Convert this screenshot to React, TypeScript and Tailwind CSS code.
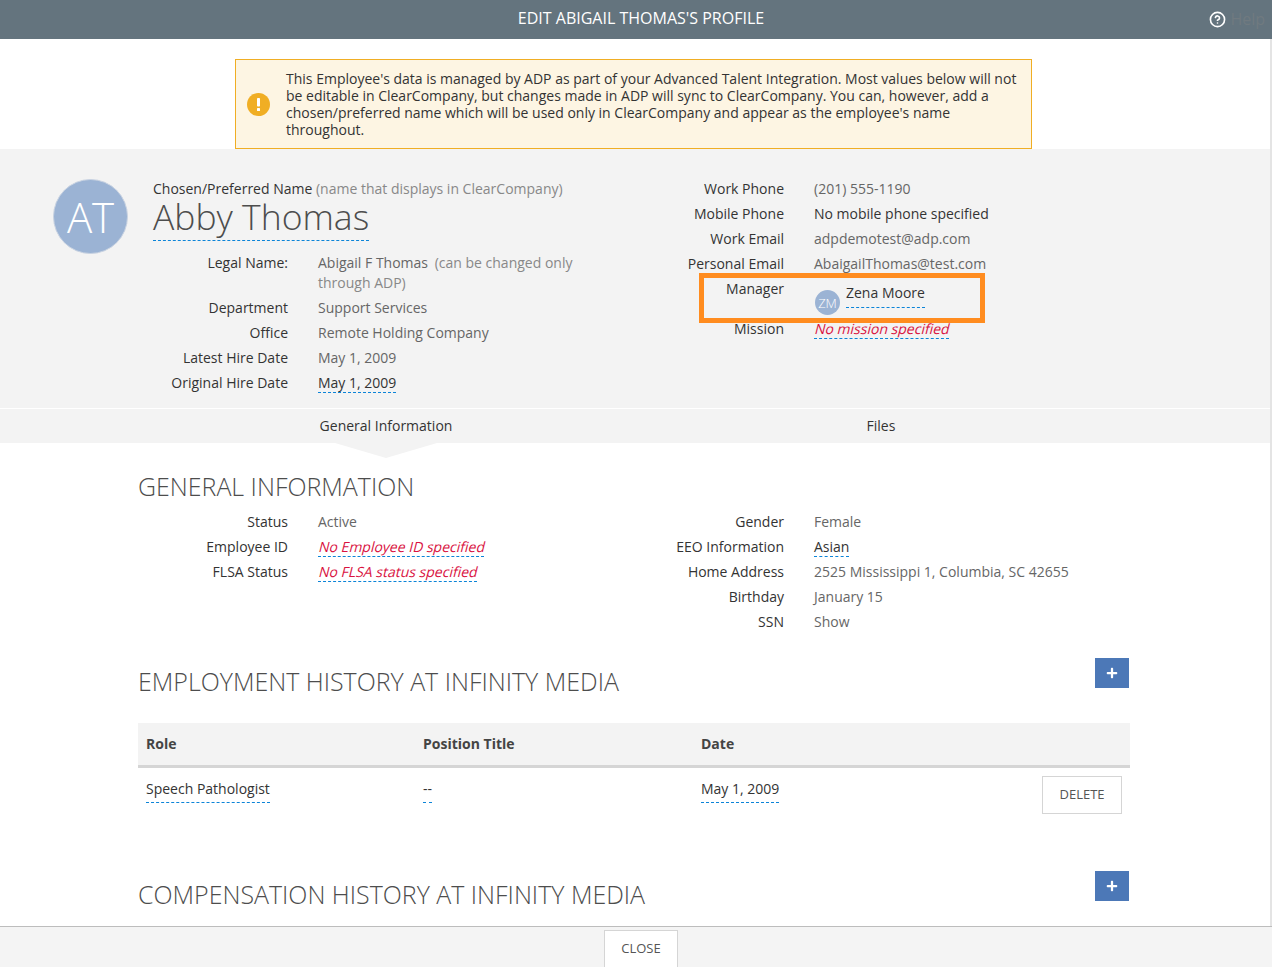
import type { ReactNode } from 'react';
import { CircleHelp } from 'lucide-react';
import { FaPlus } from 'react-icons/fa';

const Dashed = ({ children, className = '' }: { children: ReactNode; className?: string }) => (
  <span className={`inline-block border-b border-dashed border-[#0b84d8] leading-[19px] ${className}`}>
    {children}
  </span>
);

const Row = ({ label, children }: { label: string; children: ReactNode }) => (
  <div className="flex min-h-[25px] leading-[20px]">
    <div className="w-[150px] shrink-0 text-right text-[#333]">{label}</div>
    <div className="ml-[30px] text-[#666]">{children}</div>
  </div>
);

// the reference slants the regular face instead of using the italic one
const Missing = ({ children }: { children: ReactNode }) => (
  <Dashed className="text-[#d9123f]">
    <span className="-ml-px mr-px inline-block origin-bottom-left skew-x-[-14deg]">{children}</span>
  </Dashed>
);

const SectionTitle = ({ children }: { children: ReactNode }) => (
  <h2 className="text-[24.95px] font-light uppercase leading-[32px] text-[#4d4d4d]">{children}</h2>
);

const AddHeader = ({ title }: { title: string }) => (
  <div className="flex items-start justify-between">
    <div className="pt-[7px]">
      <SectionTitle>{title}</SectionTitle>
    </div>
    <button className="mr-px flex h-[30px] w-[34px] items-center justify-center bg-[#4c78b7] text-white">
      <FaPlus size={12} />
    </button>
  </div>
);

const TableValue = ({ children }: { children: ReactNode }) => (
  <span className="inline-block border-b border-dashed border-[#0b84d8] pb-[3px] leading-[20px]">{children}</span>
);

export default function App() {
  return (
    <div
      className="relative flex h-[967px] w-[1272px] flex-col overflow-hidden bg-white text-[14px] text-[#333]"
      style={{ fontFamily: '"Open Sans", "Liberation Sans", sans-serif' }}
    >
      <header className="relative flex h-[39px] shrink-0 items-center justify-center bg-[#64747e] pb-[3px] pl-[10px] text-[16px] text-white">
        EDIT ABIGAIL THOMAS'S PROFILE
        <div className="absolute right-[7px] top-[9px] flex items-center gap-[4px] text-[16px] leading-[20px] text-[#707a80]">
          <CircleHelp size={17} strokeWidth={2.3} className="text-white" />
          <span>Help</span>
        </div>
      </header>

      <main className="min-h-0 flex-1 overflow-hidden border-r-2 border-[#e4e4e4]">
        <div className="pt-[20px]">
          <div className="ml-[235px] flex h-[90px] w-[797px] items-center border border-[#f0ae24] bg-[#fdf5e3] pl-[11px]">
            <svg width="23" height="23" viewBox="0 0 23 23" className="shrink-0">
              <circle cx="11.5" cy="11.5" r="11.5" fill="#f0ae24" />
              <rect x="10" y="5" width="3" height="8.5" rx="0.8" fill="#fff" />
              <rect x="10" y="15" width="3" height="3" rx="0.6" fill="#fff" />
            </svg>
            <p className="ml-[16px] w-[740px] leading-[17px] text-[#333]">
              This Employee's data is managed by ADP as part of your Advanced Talent Integration. Most values below
              will not be editable in ClearCompany, but changes made in ADP will sync to ClearCompany. You can,
              however, add a chosen/preferred name which will be used only in ClearCompany and appear as the
              employee's name throughout.
            </p>
          </div>
        </div>

        <section className="bg-[#f3f3f3] pb-[10px] pl-[138px] pt-[30px]">
          <div className="grid grid-cols-[496px_496px]">
            <div>
              <div className="-ml-[85px] flex h-[74px] items-start gap-[25px]">
                <div className="flex h-[75px] w-[75px] shrink-0 items-center justify-center rounded-full border border-[#c9d3e2] bg-[#9bb3d4] text-[42px] font-light text-white">
                  AT
                </div>
                <div>
                  <div className="leading-[20px]">
                    Chosen/Preferred Name <span className="text-[#888]">(name that displays in ClearCompany)</span>
                  </div>
                  <div className="inline-block border-b border-dashed border-[#0b84d8] pb-[6px] text-[35.5px] font-light leading-[35px] text-[#4d4d4d]">
                    Abby Thomas
                  </div>
                </div>
              </div>
              <Row label="Legal Name:">
                <div className="mb-[5px]">
                  <div>
                    Abigail F Thomas <span className="ml-[3px] text-[#888]">(can be changed only</span>
                  </div>
                  <div className="text-[#888]">through ADP)</div>
                </div>
              </Row>
              <Row label="Department">Support Services</Row>
              <Row label="Office">Remote Holding Company</Row>
              <Row label="Latest Hire Date">May 1, 2009</Row>
              <Row label="Original Hire Date">
                <Dashed className="text-[#333]">May 1, 2009</Dashed>
              </Row>
            </div>
            <div>
              <Row label="Work Phone">(201) 555-1190</Row>
              <Row label="Mobile Phone">
                <span className="text-[#333]">No mobile phone specified</span>
              </Row>
              <Row label="Work Email">adpdemotest@adp.com</Row>
              <Row label="Personal Email">AbaigailThomas@test.com</Row>
              <div className="h-[40px]">
                <Row label="Manager">
                  <div className="flex items-start gap-[6px] pl-px">
                    <div className="mt-[11px] flex h-[25px] w-[25px] items-center justify-center rounded-full bg-[#9bb3d4] text-[13px] font-light text-white">
                      ZM
                    </div>
                    <span className="mt-[4px] inline-block border-b border-dashed border-[#0b84d8] pb-[4px] leading-[20px] text-[#333]">
                      Zena Moore
                    </span>
                  </div>
                </Row>
              </div>
              <Row label="Mission">
                <Missing>No mission specified</Missing>
              </Row>
            </div>
          </div>
        </section>

        <nav className="mt-px grid h-[34px] grid-cols-[496px_496px] bg-[#f3f3f3] pl-[138px]">
          <div className="relative flex items-center justify-center pb-[2px]">
            General Information
            <div className="absolute left-[197px] top-full h-[15px] w-[102px] bg-[#f3f3f3] [clip-path:polygon(0_0,100%_0,50%_100%)]" />
          </div>
          <div className="flex items-center justify-center pb-[2px] pr-[2px]">Files</div>
        </nav>

        <div className="ml-[138px] w-[992px]">
          <div className="pt-[27px]">
            <SectionTitle>General Information</SectionTitle>
          </div>
          <div className="mt-[10px] grid grid-cols-[496px_496px]">
            <div>
              <Row label="Status">Active</Row>
              <Row label="Employee ID">
                <Missing>No Employee ID specified</Missing>
              </Row>
              <Row label="FLSA Status">
                <Missing>No FLSA status specified</Missing>
              </Row>
            </div>
            <div>
              <Row label="Gender">Female</Row>
              <Row label="EEO Information">
                <Dashed className="text-[#333]">Asian</Dashed>
              </Row>
              <Row label="Home Address">2525 Mississippi 1, Columbia, SC 42655</Row>
              <Row label="Birthday">January 15</Row>
              <Row label="SSN">Show</Row>
            </div>
          </div>

          <div className="mt-[21px]">
            <AddHeader title="Employment History at Infinity Media" />
          </div>

          <div className="mt-[26px]">
            <div className="flex h-[45px] items-center border-b-[3px] border-[#d5d5d5] bg-[#f3f3f3] pb-[2px] pl-[8px] font-bold text-[#444]">
              <div className="w-[277px]">Role</div>
              <div className="w-[278px]">Position Title</div>
              <div>Date</div>
            </div>
            <div className="flex items-start px-[8px] pt-[8px]">
              <div className="w-[277px] pt-[2px]">
                <TableValue>Speech Pathologist</TableValue>
              </div>
              <div className="w-[278px] pt-[2px]">
                <TableValue>--</TableValue>
              </div>
              <div className="flex-1 pt-[2px]">
                <TableValue>May 1, 2009</TableValue>
              </div>
              <button className="h-[38px] w-[80px] border border-[#d5d5d5] bg-white text-[13px] text-[#555]">
                DELETE
              </button>
            </div>
          </div>

          <div className="mt-[57px]">
            <AddHeader title="Compensation History at Infinity Media" />
          </div>
        </div>
      </main>

      <footer className="flex h-[41px] shrink-0 justify-center border-t border-[#bdbdbd] bg-[#f4f4f4] pl-[10px] pt-[3px]">
        <button className="h-[50px] w-[74px] self-start border border-[#d5d5d5] bg-white pb-[12px] text-[13px] text-[#555]">
          CLOSE
        </button>
      </footer>

      <div className="absolute left-[699px] top-[273px] h-[50px] w-[286px] border-[5px] border-[#ff8c1f]" />
    </div>
  );
}
